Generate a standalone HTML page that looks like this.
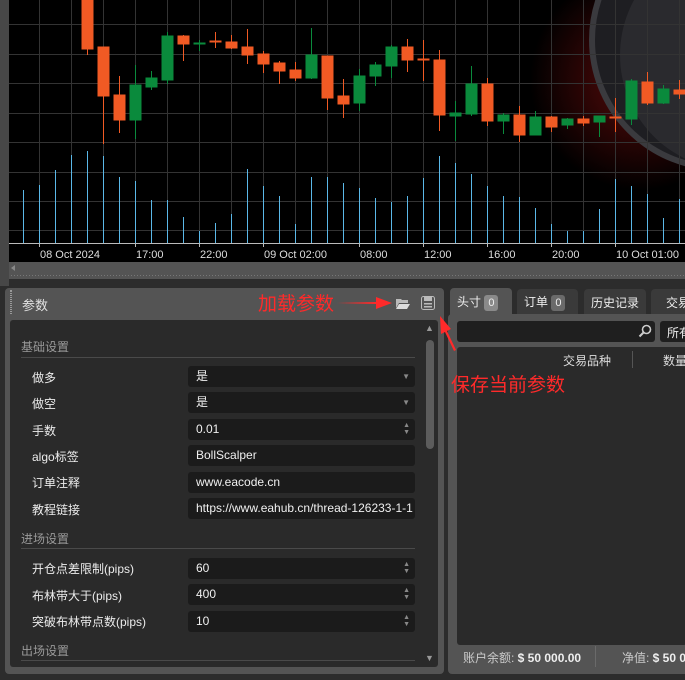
<!DOCTYPE html>
<html><head><meta charset="utf-8"><style>
*{margin:0;padding:0;box-sizing:border-box}
body{width:685px;height:680px;background:#2c2c2c;position:relative;overflow:hidden;font-family:"Liberation Sans","Noto Sans CJK SC",sans-serif;font-size:12px;color:#e8e8e8}
.a{position:absolute;white-space:nowrap}
.box{position:absolute;left:188px;width:227px;height:21px;background:#1b1b1b;border-radius:3px;padding-left:8px;line-height:21px;color:#f0f0f0;font-size:12px;overflow:hidden;white-space:nowrap}
.lbl{position:absolute;left:32px;color:#ececec;font-size:12px;white-space:nowrap}
.sec{position:absolute;left:21px;color:#9a9a9a;font-size:12px}
.ln{position:absolute;left:21px;width:394px;height:1px;background:#4a4a4a}
.dd{position:absolute;right:5px;top:0;font-size:8px;color:#888}
.sp{position:absolute;right:5px;top:3px;font-size:7px;line-height:7px;color:#888}
.red{color:#ff2a2a;font-size:19px;position:absolute;white-space:nowrap}
.bd{display:inline-block;background:#8a8a8a;border-radius:3px;padding:0 4px;font-size:11px;line-height:16px;height:16px;vertical-align:middle}
</style></head><body>
<svg class="a" style="left:0;top:0" width="685" height="286">
<defs><radialGradient id="g" cx="640" cy="80" r="110" gradientUnits="userSpaceOnUse"><stop offset="0" stop-color="#5a0a0a"/><stop offset="1" stop-color="#000"/></radialGradient></defs>
<rect width="685" height="286" fill="#2c2c2c"/>
<rect x="0" y="0" width="9" height="286" fill="#474747"/>
<rect x="9" y="0" width="676" height="262" fill="#000"/>
<rect x="530" y="0" width="155" height="200" fill="url(#g)"/>
<circle cx="720" cy="40" r="128" fill="#1e1e22" stroke="#3a3a3e" stroke-width="6"/>
<circle cx="735" cy="55" r="115" fill="#2a2a2e"/>
<g stroke="#333" stroke-width="1">
<line x1="9" y1="24.5" x2="685" y2="24.5"/><line x1="9" y1="54.5" x2="685" y2="54.5"/><line x1="9" y1="83.5" x2="685" y2="83.5"/><line x1="9" y1="113.5" x2="685" y2="113.5"/><line x1="9" y1="142.5" x2="685" y2="142.5"/><line x1="9" y1="172.5" x2="685" y2="172.5"/><line x1="9" y1="201.5" x2="685" y2="201.5"/><line x1="9" y1="230.5" x2="685" y2="230.5"/>
<line x1="39.5" y1="0" x2="39.5" y2="243"/><line x1="71.5" y1="0" x2="71.5" y2="243"/><line x1="103.5" y1="0" x2="103.5" y2="243"/><line x1="135.5" y1="0" x2="135.5" y2="243"/><line x1="167.5" y1="0" x2="167.5" y2="243"/><line x1="199.5" y1="0" x2="199.5" y2="243"/><line x1="231.5" y1="0" x2="231.5" y2="243"/><line x1="263.5" y1="0" x2="263.5" y2="243"/><line x1="295.5" y1="0" x2="295.5" y2="243"/><line x1="327.5" y1="0" x2="327.5" y2="243"/><line x1="359.5" y1="0" x2="359.5" y2="243"/><line x1="391.5" y1="0" x2="391.5" y2="243"/><line x1="423.5" y1="0" x2="423.5" y2="243"/><line x1="455.5" y1="0" x2="455.5" y2="243"/><line x1="487.5" y1="0" x2="487.5" y2="243"/><line x1="519.5" y1="0" x2="519.5" y2="243"/><line x1="551.5" y1="0" x2="551.5" y2="243"/><line x1="583.5" y1="0" x2="583.5" y2="243"/><line x1="615.5" y1="0" x2="615.5" y2="243"/><line x1="647.5" y1="0" x2="647.5" y2="243"/><line x1="679.5" y1="0" x2="679.5" y2="243"/>
</g>
<g stroke="#5ab8e8" stroke-width="1">
<line x1="23.5" y1="190" x2="23.5" y2="243"/><line x1="39.5" y1="185" x2="39.5" y2="243"/><line x1="55.5" y1="170" x2="55.5" y2="243"/><line x1="71.5" y1="155" x2="71.5" y2="243"/><line x1="87.5" y1="151" x2="87.5" y2="243"/><line x1="103.5" y1="156" x2="103.5" y2="243"/><line x1="119.5" y1="177" x2="119.5" y2="243"/><line x1="135.5" y1="181" x2="135.5" y2="243"/><line x1="151.5" y1="200" x2="151.5" y2="243"/><line x1="167.5" y1="200" x2="167.5" y2="243"/><line x1="183.5" y1="217" x2="183.5" y2="243"/><line x1="199.5" y1="231" x2="199.5" y2="243"/><line x1="215.5" y1="223" x2="215.5" y2="243"/><line x1="231.5" y1="214" x2="231.5" y2="243"/><line x1="247.5" y1="169" x2="247.5" y2="243"/><line x1="263.5" y1="186" x2="263.5" y2="243"/><line x1="279.5" y1="196" x2="279.5" y2="243"/><line x1="295.5" y1="224" x2="295.5" y2="243"/><line x1="311.5" y1="177" x2="311.5" y2="243"/><line x1="327.5" y1="177" x2="327.5" y2="243"/><line x1="343.5" y1="183" x2="343.5" y2="243"/><line x1="359.5" y1="188" x2="359.5" y2="243"/><line x1="375.5" y1="198" x2="375.5" y2="243"/><line x1="391.5" y1="202" x2="391.5" y2="243"/><line x1="407.5" y1="196" x2="407.5" y2="243"/><line x1="423.5" y1="178" x2="423.5" y2="243"/><line x1="439.5" y1="156" x2="439.5" y2="243"/><line x1="455.5" y1="163" x2="455.5" y2="243"/><line x1="471.5" y1="174" x2="471.5" y2="243"/><line x1="487.5" y1="186" x2="487.5" y2="243"/><line x1="503.5" y1="196" x2="503.5" y2="243"/><line x1="519.5" y1="197" x2="519.5" y2="243"/><line x1="535.5" y1="208" x2="535.5" y2="243"/><line x1="551.5" y1="224" x2="551.5" y2="243"/><line x1="567.5" y1="231" x2="567.5" y2="243"/><line x1="583.5" y1="231" x2="583.5" y2="243"/><line x1="599.5" y1="209" x2="599.5" y2="243"/><line x1="615.5" y1="179" x2="615.5" y2="243"/><line x1="631.5" y1="186" x2="631.5" y2="243"/><line x1="647.5" y1="194" x2="647.5" y2="243"/><line x1="663.5" y1="218" x2="663.5" y2="243"/><line x1="679.5" y1="199" x2="679.5" y2="243"/>
</g>
<g stroke-width="1">
<g stroke="#f15a24" fill="#f15a24">
<line x1="87.5" y1="0" x2="87.5" y2="55"/><rect x="82" y="0" width="11" height="49"/>
<line x1="103.5" y1="47" x2="103.5" y2="144"/><rect x="98" y="47" width="11" height="49"/>
<line x1="119.5" y1="76" x2="119.5" y2="133"/><rect x="114" y="95" width="11" height="25"/>
<line x1="183.5" y1="35" x2="183.5" y2="61"/><rect x="178" y="36" width="11" height="8"/>
<line x1="215.5" y1="32" x2="215.5" y2="48"/><rect x="210" y="41" width="11" height="1"/>
<line x1="231.5" y1="35" x2="231.5" y2="49"/><rect x="226" y="42" width="11" height="6"/>
<line x1="247.5" y1="29" x2="247.5" y2="64"/><rect x="242" y="47" width="11" height="8"/>
<line x1="263.5" y1="51" x2="263.5" y2="73"/><rect x="258" y="54" width="11" height="10"/>
<line x1="279.5" y1="61" x2="279.5" y2="84"/><rect x="274" y="63" width="11" height="8"/>
<line x1="295.5" y1="62" x2="295.5" y2="81"/><rect x="290" y="70" width="11" height="8"/>
<line x1="327.5" y1="56" x2="327.5" y2="110"/><rect x="322" y="56" width="11" height="42"/>
<line x1="343.5" y1="79" x2="343.5" y2="118"/><rect x="338" y="96" width="11" height="8"/>
<line x1="407.5" y1="39" x2="407.5" y2="72"/><rect x="402" y="47" width="11" height="13"/>
<line x1="423.5" y1="40" x2="423.5" y2="81"/><rect x="418" y="59" width="11" height="1"/>
<line x1="439.5" y1="50" x2="439.5" y2="131"/><rect x="434" y="60" width="11" height="55"/>
<line x1="487.5" y1="78" x2="487.5" y2="126"/><rect x="482" y="84" width="11" height="37"/>
<line x1="519.5" y1="106" x2="519.5" y2="142"/><rect x="514" y="115" width="11" height="20"/>
<line x1="551.5" y1="116" x2="551.5" y2="132"/><rect x="546" y="117" width="11" height="10"/>
<line x1="583.5" y1="116" x2="583.5" y2="126"/><rect x="578" y="119" width="11" height="4"/>
<line x1="615.5" y1="98" x2="615.5" y2="132"/><rect x="610" y="117" width="11" height="1"/>
<line x1="647.5" y1="72" x2="647.5" y2="105"/><rect x="642" y="82" width="11" height="21"/>
<line x1="679.5" y1="80" x2="679.5" y2="99"/><rect x="674" y="90" width="11" height="4"/>
</g>
<g stroke="#0a8a3c" fill="#0a8a3c">
<line x1="135.5" y1="65" x2="135.5" y2="139"/><rect x="130" y="85" width="11" height="35"/>
<line x1="151.5" y1="71" x2="151.5" y2="90"/><rect x="146" y="78" width="11" height="9"/>
<line x1="167.5" y1="32" x2="167.5" y2="84"/><rect x="162" y="36" width="11" height="44"/>
<line x1="199.5" y1="40" x2="199.5" y2="51"/><rect x="194" y="43" width="11" height="1"/>
<line x1="311.5" y1="28" x2="311.5" y2="79"/><rect x="306" y="55" width="11" height="23"/>
<line x1="359.5" y1="69" x2="359.5" y2="111"/><rect x="354" y="76" width="11" height="27"/>
<line x1="375.5" y1="62" x2="375.5" y2="86"/><rect x="370" y="65" width="11" height="11"/>
<line x1="391.5" y1="45" x2="391.5" y2="78"/><rect x="386" y="47" width="11" height="19"/>
<line x1="455.5" y1="101" x2="455.5" y2="141"/><rect x="450" y="113" width="11" height="3"/>
<line x1="471.5" y1="66" x2="471.5" y2="116"/><rect x="466" y="84" width="11" height="30"/>
<line x1="503.5" y1="113" x2="503.5" y2="134"/><rect x="498" y="115" width="11" height="6"/>
<line x1="535.5" y1="111" x2="535.5" y2="135"/><rect x="530" y="117" width="11" height="18"/>
<line x1="567.5" y1="118" x2="567.5" y2="129"/><rect x="562" y="119" width="11" height="6"/>
<line x1="599.5" y1="116" x2="599.5" y2="137"/><rect x="594" y="116" width="11" height="6"/>
<line x1="631.5" y1="79" x2="631.5" y2="125"/><rect x="626" y="81" width="11" height="38"/>
<line x1="663.5" y1="85" x2="663.5" y2="104"/><rect x="658" y="89" width="11" height="14"/>
</g></g>
<line x1="9" y1="243.5" x2="685" y2="243.5" stroke="#bbb"/>
<g stroke="#bbb"><line x1="39.5" y1="243" x2="39.5" y2="247"/><line x1="135.5" y1="243" x2="135.5" y2="247"/><line x1="199.5" y1="243" x2="199.5" y2="247"/><line x1="263.5" y1="243" x2="263.5" y2="247"/><line x1="359.5" y1="243" x2="359.5" y2="247"/><line x1="423.5" y1="243" x2="423.5" y2="247"/><line x1="487.5" y1="243" x2="487.5" y2="247"/><line x1="551.5" y1="243" x2="551.5" y2="247"/><line x1="615.5" y1="243" x2="615.5" y2="247"/></g>
<g fill="#ddd" font-family="Liberation Sans" font-size="11">
<text x="40" y="258">08 Oct 2024</text><text x="136" y="258">17:00</text><text x="200" y="258">22:00</text><text x="264" y="258">09 Oct 02:00</text><text x="360" y="258">08:00</text><text x="424" y="258">12:00</text><text x="488" y="258">16:00</text><text x="552" y="258">20:00</text><text x="616" y="258">10 Oct 01:00</text>
</g>
<rect x="9" y="262" width="676" height="17" fill="#545454"/>
<line x1="11" y1="275.5" x2="685" y2="275.5" stroke="#777" stroke-dasharray="1 2"/>
<path d="M11 268 L15 265 L15 271Z" fill="#888"/>
</svg>

<div class="a" style="left:5px;top:288px;width:439px;height:386px;background:#545454;border-radius:4px"></div>
<div class="a" style="left:10px;top:290px;width:2px;height:24px;border-left:1px dotted #999;border-right:1px dotted #999"></div>
<div class="a" style="left:22px;top:295px;font-size:13px;color:#e0e0e0">参数</div>
<div class="red" style="left:258px;top:289px">加载参数</div>
<svg class="a" style="left:336px;top:294px" width="60" height="18"><path d="M1 9 L40 8 L40 3 L56 9 L40 15 L40 10 Z" fill="#ff2a2a"/></svg>
<svg class="a" style="left:395px;top:296px" width="16" height="14"><path d="M1 3 h5 l1 1 h6 v3 H4 L1 12Z" fill="#bbb"/><path d="M4 8 h11 l-3 5 H1Z" fill="#ddd"/></svg>
<svg class="a" style="left:421px;top:296px" width="14" height="14"><rect x="0.5" y="0.5" width="13" height="13" rx="2" fill="none" stroke="#bbb"/><rect x="3" y="1" width="8" height="4" fill="#bbb"/><rect x="3" y="7" width="8" height="1.5" fill="#bbb"/><rect x="3" y="10" width="8" height="1.5" fill="#bbb"/></svg>
<div class="a" style="left:10px;top:320px;width:428px;height:347px;background:#2a2a2a;border-radius:3px"></div>
<div class="a" style="left:425px;top:323px;color:#999;font-size:9px">▲</div>
<div class="a" style="left:426px;top:340px;width:8px;height:109px;background:#5c5c5c;border-radius:4px"></div>
<div class="a" style="left:425px;top:653px;color:#999;font-size:9px">▼</div>

<div class="sec" style="top:338px">基础设置</div><div class="ln" style="top:357px"></div>
<div class="lbl" style="top:369px">做多</div><div class="box" style="top:366px">是<span class="dd">▼</span></div>
<div class="lbl" style="top:395px">做空</div><div class="box" style="top:392px">是<span class="dd">▼</span></div>
<div class="lbl" style="top:422px">手数</div><div class="box" style="top:419px">0.01<span class="sp">▲<br>▼</span></div>
<div class="lbl" style="top:448px">algo标签</div><div class="box" style="top:445px">BollScalper</div>
<div class="lbl" style="top:474px">订单注释</div><div class="box" style="top:472px">www.eacode.cn</div>
<div class="lbl" style="top:501px">教程链接</div><div class="box" style="top:498px">https://www.eahub.cn/thread-126233-1-1</div>
<div class="sec" style="top:530px">进场设置</div><div class="ln" style="top:548px"></div>
<div class="lbl" style="top:560px">开仓点差限制(pips)</div><div class="box" style="top:558px">60<span class="sp">▲<br>▼</span></div>
<div class="lbl" style="top:587px">布林带大于(pips)</div><div class="box" style="top:584px">400<span class="sp">▲<br>▼</span></div>
<div class="lbl" style="top:613px">突破布林带点数(pips)</div><div class="box" style="top:611px">10<span class="sp">▲<br>▼</span></div>
<div class="sec" style="top:642px">出场设置</div><div class="ln" style="top:660px"></div>

<div class="a" style="left:448px;top:314px;width:240px;height:360px;background:#545454;border-radius:4px 0 0 4px"></div>
<div class="a" style="left:450px;top:288px;width:62px;height:28px;background:#545454;border-radius:4px 4px 0 0;padding:5px 0 0 7px;color:#eee">头寸 <span class="bd">0</span></div>
<div class="a" style="left:517px;top:289px;width:61px;height:25px;background:#3a3a3a;border-radius:4px 4px 0 0;padding:4px 0 0 7px;color:#eee">订单 <span class="bd" style="background:#6a6a6a">0</span></div>
<div class="a" style="left:584px;top:289px;width:62px;height:25px;background:#3a3a3a;border-radius:4px 4px 0 0;padding:5px 0 0 7px;color:#eee">历史记录</div>
<div class="a" style="left:651px;top:289px;width:40px;height:25px;background:#3a3a3a;border-radius:4px 4px 0 0;padding:5px 0 0 15px;color:#eee">交易</div>
<div class="a" style="left:457px;top:321px;width:198px;height:21px;background:#1f1f1f;border-radius:3px"></div>
<svg class="a" style="left:638px;top:324px" width="14" height="14"><circle cx="8.5" cy="5.5" r="4" fill="none" stroke="#ccc" stroke-width="1.6"/><path d="M5.5 8.5 L1.5 12.5" stroke="#ccc" stroke-width="2"/></svg>
<div class="a" style="left:660px;top:321px;width:30px;height:21px;background:#1f1f1f;border-radius:3px;padding:3px 0 0 7px;color:#eee">所有</div>
<div class="a" style="left:457px;top:347px;width:230px;height:298px;background:#2a2a2a;border-radius:3px"></div>
<div class="a" style="left:563px;top:352px;color:#ddd">交易品种</div>
<div class="a" style="left:632px;top:351px;width:1px;height:17px;background:#555"></div>
<div class="a" style="left:663px;top:352px;color:#ddd">数量</div>
<div class="red" style="left:451px;top:370px">保存当前参数</div>
<svg class="a" style="left:436px;top:314px" width="24" height="40"><path d="M20 36 L11 17 L15 15 L4 2 L5 20 L9 18 L18 37Z" fill="#ff2a2a"/></svg>
<div class="a" style="left:463px;top:649px;color:#ccc">账户余额: <b style="color:#eee">$ 50 000.00</b></div>
<div class="a" style="left:595px;top:646px;width:1px;height:21px;background:#6a6a6a"></div>
<div class="a" style="left:622px;top:649px;color:#ccc">净值: <b style="color:#eee">$ 50 000.00</b></div>
</body></html>
